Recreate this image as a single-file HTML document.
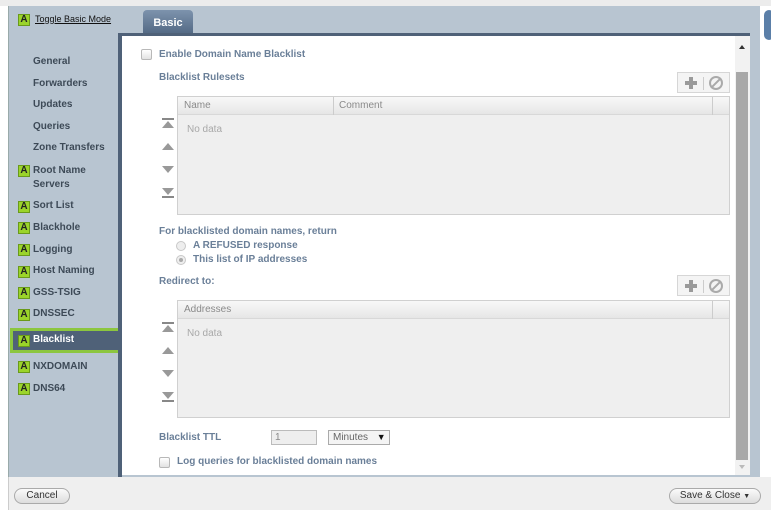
<!DOCTYPE html>
<html><head><style>
*{margin:0;padding:0;box-sizing:border-box}
body{width:771px;height:510px;position:relative;background:#fff;font-family:"Liberation Sans",Arial,sans-serif;font-size:10px;overflow:hidden}
.a{position:absolute}
.nav{position:absolute;left:33px;font-weight:bold;color:#3d4a57;font-size:10px}
.A{position:absolute;left:18px;width:12px;height:12px;background:#9bd42a;border:1px solid #6a9a1a;font-weight:bold;font-size:10px;line-height:10px;text-align:center;color:#222}
.lbl{position:absolute;font-weight:bold;color:#6a7f98;font-size:10px}
.grid{position:absolute;left:177px;width:553px;background:#efefef;border:1px solid #d0d0d0}
.gh{height:18px;background:linear-gradient(#f8f8f8,#e6e6e6);border-bottom:1px solid #d8d8d8;color:#8a8a8a;line-height:18px;padding-left:6px;position:relative}
.nd{color:#a8a8a8;padding:9px 0 0 9px}
.arr{position:absolute;left:162px;width:12px;height:10px}
.btns{position:absolute;left:677px;width:53px;height:21px;border:1px solid #d6d6d6;background:#f4f4f4}
.cb{position:absolute;width:11px;height:11px;border:1px solid #b8b8b8;border-radius:2px;background:linear-gradient(#fff,#e2e2e2)}
.rb{position:absolute;width:10px;height:10px;border:1px solid #c8c8c8;border-radius:50%;background:#eee}
.plus{position:absolute;left:7px;top:4px;width:12px;height:12px}
.plus:before{content:"";position:absolute;left:4px;top:0;width:4px;height:12px;background:#9a9a9a}
.plus:after{content:"";position:absolute;left:0;top:4px;width:12px;height:4px;background:#9a9a9a}
</style></head><body>
<div class="a" style="left:0;top:0;width:771px;height:6px;background:#ececec"></div>
<div class="a" style="left:8px;top:6px;width:752px;height:471px;background:#b8c5d1;border-left:1px solid #9aa"></div>
<div class="a" style="left:764px;top:10px;width:10px;height:30px;background:#5b7fa8;border-radius:5px"></div>
<div class="A" style="top:14px">A</div>
<div class="a" style="left:35px;top:14px;font-size:9px;text-decoration:underline;color:#111">Toggle Basic Mode</div>
<div class="nav" style="top:56px">General</div>
<div class="nav" style="top:78px">Forwarders</div>
<div class="nav" style="top:99px">Updates</div>
<div class="nav" style="top:121px">Queries</div>
<div class="nav" style="top:142px">Zone Transfers</div>
<div class="A" style="top:165px">A</div><div class="nav" style="top:164px;line-height:14px">Root Name<br>Servers</div>
<div class="A" style="top:201px">A</div><div class="nav" style="top:200px">Sort List</div>
<div class="A" style="top:222px">A</div><div class="nav" style="top:222px">Blackhole</div>
<div class="A" style="top:244px">A</div><div class="nav" style="top:244px">Logging</div>
<div class="A" style="top:266px">A</div><div class="nav" style="top:265px">Host Naming</div>
<div class="A" style="top:287px">A</div><div class="nav" style="top:287px">GSS-TSIG</div>
<div class="A" style="top:309px">A</div><div class="nav" style="top:308px">DNSSEC</div>
<div class="a" style="left:10px;top:328px;width:111px;height:25px;background:#4f6178;border:3px solid #8cc63f"></div>
<div class="A" style="top:335px">A</div><div class="nav" style="top:334px;color:#fff">Blacklist</div>
<div class="A" style="top:361px">A</div><div class="nav" style="top:361px">NXDOMAIN</div>
<div class="A" style="top:383px">A</div><div class="nav" style="top:383px">DNS64</div>
<div class="a" style="left:143px;top:10px;width:50px;height:24px;background:linear-gradient(#7d93ad,#536984);border-radius:4px 4px 0 0;color:#fff;font-weight:bold;font-size:11px;text-align:center;line-height:27px">Basic</div>
<div class="a" style="left:118px;top:33px;width:632px;height:3px;background:#4f6178"></div>
<div class="a" style="left:118px;top:33px;width:4px;height:444px;background:#4f6178"></div>
<div class="a" style="left:163px;top:36px;border-left:4px solid transparent;border-right:4px solid transparent;border-top:4px solid #4f6178"></div>
<div class="a" style="left:122px;top:36px;width:613px;height:439px;background:#fff"></div>
<div class="a" style="left:735px;top:36px;width:15px;height:439px;background:#f2f2f2"></div>
<div class="a" style="left:736px;top:72px;width:12px;height:388px;background:#a8a8a8"></div>
<div class="a" style="left:739px;top:45px;border-left:3px solid transparent;border-right:3px solid transparent;border-bottom:4px solid #333"></div>
<div class="a" style="left:739px;top:465px;border-left:3px solid transparent;border-right:3px solid transparent;border-top:4px solid #bbb"></div>

<div class="cb" style="left:141px;top:49px"></div>
<div class="lbl" style="left:159px;top:49px">Enable Domain Name Blacklist</div>
<div class="lbl" style="left:159px;top:72px">Blacklist Rulesets</div>
<div class="btns" style="top:72px"><span class="plus"></span><span class="a" style="left:25px;top:4px;width:1px;height:13px;background:#ccc"></span><span class="a" style="left:31px;top:3px;width:14px;height:14px;border:2px solid #aaa;border-radius:50%"></span><span class="a" style="left:37px;top:3px;width:2px;height:14px;background:#aaa;transform:rotate(45deg)"></span></div>
<div class="grid" style="top:96px;height:119px"><div class="gh">Name<span class="a" style="left:155px;top:0;border-left:1px solid #ccc;padding-left:5px">Comment</span><span class="a" style="left:534px;top:0;height:18px;border-left:1px solid #ccc"></span></div><div class="nd">No data</div></div>
<div class="arr" style="top:118px"><div style="height:2px;background:#888"></div><div style="margin:1px auto 0;width:0;border-left:6px solid transparent;border-right:6px solid transparent;border-bottom:7px solid #999"></div></div>
<div class="arr" style="top:143px"><div style="width:0;border-left:6px solid transparent;border-right:6px solid transparent;border-bottom:7px solid #999"></div></div>
<div class="arr" style="top:166px"><div style="width:0;border-left:6px solid transparent;border-right:6px solid transparent;border-top:7px solid #999"></div></div>
<div class="arr" style="top:188px"><div style="width:0;border-left:6px solid transparent;border-right:6px solid transparent;border-top:7px solid #999"></div><div style="height:2px;margin-top:1px;background:#888"></div></div>

<div class="lbl" style="left:159px;top:226px">For blacklisted domain names, return</div>
<div class="rb" style="left:176px;top:241px"></div>
<div class="lbl" style="left:193px;top:240px">A REFUSED response</div>
<div class="rb" style="left:176px;top:255px"><div style="width:4px;height:4px;margin:2px;border-radius:50%;background:#aaa"></div></div>
<div class="lbl" style="left:193px;top:254px">This list of IP addresses</div>
<div class="lbl" style="left:159px;top:276px">Redirect to:</div>
<div class="btns" style="top:275px"><span class="plus"></span><span class="a" style="left:25px;top:4px;width:1px;height:13px;background:#ccc"></span><span class="a" style="left:31px;top:3px;width:14px;height:14px;border:2px solid #aaa;border-radius:50%"></span><span class="a" style="left:37px;top:3px;width:2px;height:14px;background:#aaa;transform:rotate(45deg)"></span></div>
<div class="grid" style="top:300px;height:118px"><div class="gh">Addresses<span class="a" style="left:534px;top:0;height:18px;border-left:1px solid #ccc"></span></div><div class="nd">No data</div></div>
<div class="arr" style="top:322px"><div style="height:2px;background:#888"></div><div style="margin:1px auto 0;width:0;border-left:6px solid transparent;border-right:6px solid transparent;border-bottom:7px solid #999"></div></div>
<div class="arr" style="top:347px"><div style="width:0;border-left:6px solid transparent;border-right:6px solid transparent;border-bottom:7px solid #999"></div></div>
<div class="arr" style="top:370px"><div style="width:0;border-left:6px solid transparent;border-right:6px solid transparent;border-top:7px solid #999"></div></div>
<div class="arr" style="top:392px"><div style="width:0;border-left:6px solid transparent;border-right:6px solid transparent;border-top:7px solid #999"></div><div style="height:2px;margin-top:1px;background:#888"></div></div>

<div class="lbl" style="left:159px;top:432px">Blacklist TTL</div>
<div class="a" style="left:271px;top:430px;width:46px;height:15px;border:1px solid #bbb;background:#eee;color:#888;padding-left:3px;line-height:13px">1</div>
<div class="a" style="left:328px;top:430px;width:62px;height:15px;border:1px solid #aaa;background:#f4f4f4;color:#666;padding-left:4px;line-height:13px">Minutes <span style="color:#111;font-size:9px;margin-left:6px">▼</span></div>
<div class="cb" style="left:159px;top:457px"></div>
<div class="lbl" style="left:177px;top:456px">Log queries for blacklisted domain names</div>

<div class="a" style="left:8px;top:477px;width:763px;height:33px;background:#efefef;border-left:1px solid #ccc"></div>
<div class="a" style="left:14px;top:488px;width:56px;height:16px;border:1px solid #aaa;border-radius:8px;background:linear-gradient(#fafafa,#ddd);text-align:center;line-height:14px;color:#333">Cancel</div>
<div class="a" style="left:669px;top:488px;width:92px;height:16px;border:1px solid #aaa;border-radius:8px;background:linear-gradient(#fafafa,#ddd);text-align:center;line-height:14px;color:#333">Save &amp; Close <span style="font-size:7px">▼</span></div>
</body></html>
